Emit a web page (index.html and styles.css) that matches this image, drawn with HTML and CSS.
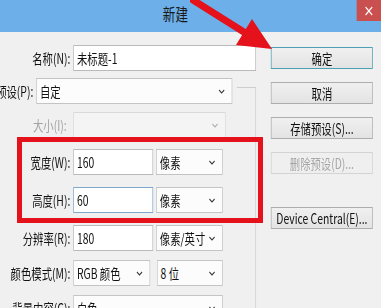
FILE: index.html
```html
<!DOCTYPE html>
<html lang="zh-CN">

<head>
    <meta charset="UTF-8">
    <title>新建</title>
    <link rel="stylesheet" href="styles.css">
</head>

<body>
    <div class="screen">
        <div class="dialog">
            <div class="titlebar">
                <span class="title">新建</span>
                <span class="close">
                    <svg width="11" height="10" viewBox="0 0 11 10"><path d="M1 1L10 9M10 1L1 9" stroke="#fff" stroke-width="1.6"/></svg>
                </span>
            </div>
            <div class="content">
                <div class="form">
                    <div class="row">
                        <label class="lbl">名称(N):</label>
                        <div class="field name">未标题-1</div>
                    </div>
                    <div class="row preset">
                        <label class="lbl short">预设(P):</label>
                        <div class="combo preset-box">自定
                            <svg class="chev" width="9" height="5" viewBox="0 0 9 5"><path d="M1 1L4.5 4L8 1" fill="none" stroke="#333" stroke-width="1.3"/></svg>
                        </div>
                    </div>
                    <!-- 分组框：上边和右边的细线 -->
                    <div class="frame">
                        <div class="row">
                            <label class="lbl off">大小(I):</label>
                            <div class="combo size off">
                                <svg class="chev" width="9" height="5" viewBox="0 0 9 5"><path d="M1 1L4.5 4L8 1" fill="none" stroke="#aaa" stroke-width="1.3"/></svg>
                            </div>
                        </div>
                        <div class="group">
                            <div class="row">
                                <label class="lbl">宽度(W):</label>
                                <div class="field num">160</div>
                                <div class="combo unit">像素
                                    <svg class="chev" width="9" height="5" viewBox="0 0 9 5"><path d="M1 1L4.5 4L8 1" fill="none" stroke="#333" stroke-width="1.3"/></svg>
                                </div>
                            </div>
                            <div class="row">
                                <label class="lbl">高度(H):</label>
                                <div class="field num active">60</div>
                                <div class="combo unit">像素
                                    <svg class="chev" width="9" height="5" viewBox="0 0 9 5"><path d="M1 1L4.5 4L8 1" fill="none" stroke="#333" stroke-width="1.3"/></svg>
                                </div>
                            </div>
                        </div>
                        <div class="row">
                            <label class="lbl">分辨率(R):</label>
                            <div class="field num">180</div>
                            <div class="combo unit">像素/英寸
                                <svg class="chev" width="9" height="5" viewBox="0 0 9 5"><path d="M1 1L4.5 4L8 1" fill="none" stroke="#333" stroke-width="1.3"/></svg>
                            </div>
                        </div>
                        <div class="row">
                            <label class="lbl">颜色模式(M):</label>
                            <div class="combo mode">RGB 颜色
                                <svg class="chev" width="9" height="5" viewBox="0 0 9 5"><path d="M1 1L4.5 4L8 1" fill="none" stroke="#333" stroke-width="1.3"/></svg>
                            </div>
                            <div class="combo depth">8 位
                                <svg class="chev" width="9" height="5" viewBox="0 0 9 5"><path d="M1 1L4.5 4L8 1" fill="none" stroke="#333" stroke-width="1.3"/></svg>
                            </div>
                        </div>
                        <div class="row">
                            <label class="lbl">背景内容(C):</label>
                            <div class="combo bg">白色
                                <svg class="chev" width="9" height="5" viewBox="0 0 9 5"><path d="M1 1L4.5 4L8 1" fill="none" stroke="#333" stroke-width="1.3"/></svg>
                            </div>
                        </div>
                    </div>
                </div>
                <div class="buttons">
                    <button class="btn default">确定</button>
                    <button class="btn">取消</button>
                    <button class="btn">存储预设(S)...</button>
                    <button class="btn off">删除预设(D)...</button>
                    <button class="btn device">Device Central(E)...</button>
                </div>
            </div>
        </div>

        <!-- 红色标注 -->
        <div class="mark"></div>
        <svg class="arrow" width="90" height="55" viewBox="0 0 90 55">
            <path d="M3 0L57 34" stroke="#e5111b" stroke-width="7" stroke-linecap="round"/>
            <polygon points="46,45 62,19 82,49" fill="#e5111b"/>
        </svg>
    </div>
</body>

</html>
```

FILE: styles.css
```css
html, body {
    margin: 0;
    padding: 0;
    background: #f0f0f0;
}

.screen {
    position: relative;
    width: 381px;
    height: 308px;
    overflow: hidden;
    background: #f0f0f0;
    font-family: "Noto Sans CJK SC", "Noto Sans", sans-serif;
    font-size: 14px;
    color: #111;
}

/* 截图本身被横向压扁了，整体按比例缩 */
.dialog {
    width: 515px;
    transform: scaleX(0.74);
    transform-origin: 0 0;
}

.titlebar {
    height: 32px;
    background: #6cafe9;
    display: flex;
    align-items: flex-start;
}

.title {
    font-size: 17px;
    line-height: 27px;
    padding-left: 220px;
    color: #1a1a1a;
}

.close {
    margin-left: auto;
    width: 33px;
    height: 21px;
    background: #c9504f;
    display: flex;
    align-items: center;
    justify-content: center;
}

.content {
    display: flex;
    padding-top: 13px;
}

.form {
    width: 346px;
    display: flex;
    flex-direction: column;
    gap: 7px;
}

.row {
    display: flex;
    align-items: center;
    height: 26px;
}

.lbl {
    flex: none;
    width: 95px;
    margin-right: 4px;
    display: flex;
    justify-content: flex-end;
    white-space: nowrap;
}

.lbl.short {
    width: 45px;
}

.lbl.off {
    color: #a3a3a3;
    padding-right: 5px;
    width: 90px;
}

.preset {
    position: relative;
    z-index: 1;
    width: 320px;
    background: #f0f0f0;
}

.field,
.combo {
    box-sizing: border-box;
    height: 26px;
    line-height: 24px;
    padding-left: 4px;
    border: 1px solid #b9b9b9;
    background: #fff;
    white-space: nowrap;
}

.combo {
    display: flex;
    align-items: center;
    justify-content: space-between;
    padding-right: 9px;
    background: #fcfcfc;
    border-color: #c4c4c4;
}

.combo.off {
    background: #f4f4f4;
    border-color: #dadada;
}

.name { width: 249px; }
.preset-box { width: 265px; }
.size { width: 206px; justify-content: flex-end; }
.num { width: 108px; }
.num.active { border-color: #7ea7cf; }
.unit { width: 90px; margin-left: 4px; }
.mode { width: 104px; }
.depth { width: 89px; margin-left: 9px; }
.bg { width: 202px; }

.frame {
    margin-top: -24px;
    padding-top: 24px;
    border-top: 1px solid #cdcdcd;
    border-right: 1px solid #cdcdcd;
    display: flex;
    flex-direction: column;
    gap: 9px;
}

.group {
    display: flex;
    flex-direction: column;
    gap: 12px;
    margin: 2px 0 3px;
}

.buttons {
    margin-left: 20px;
    padding-top: 2px;
    width: 138px;
    display: flex;
    flex-direction: column;
    gap: 13px;
}

.btn {
    height: 22px;
    padding: 0;
    font-family: inherit;
    font-size: 14px;
    line-height: 20px;
    color: #111;
    background: linear-gradient(#f0f0f0, #e3e3e3);
    border: 1px solid #adadad;
}

.btn.default {
    border-color: #4d9fb3;
}

.btn.off {
    color: #a6a6a6;
    background: #efefef;
    border-color: #d3d3d3;
}

.btn.device {
    margin-top: 20px;
}

.mark {
    position: absolute;
    left: 17px;
    top: 137px;
    width: 246px;
    height: 86px;
    box-sizing: border-box;
    border: 5px solid #e5111b;
}

.arrow {
    position: absolute;
    left: 190px;
    top: 0;
}
```
